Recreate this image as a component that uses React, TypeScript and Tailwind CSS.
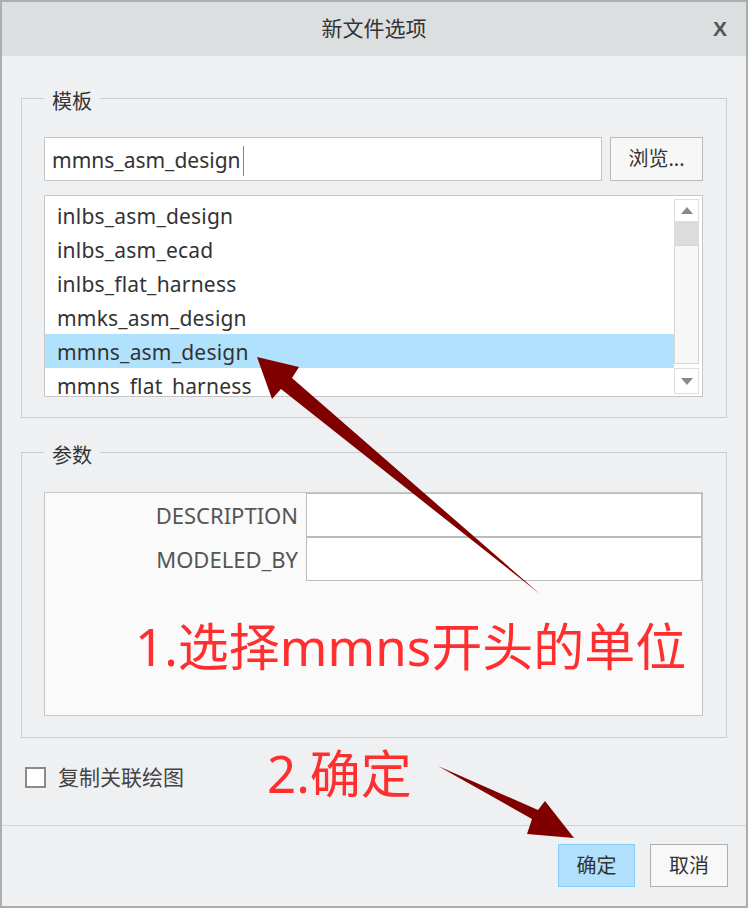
const templates = [
  "inlbs_asm_design",
  "inlbs_asm_ecad",
  "inlbs_flat_harness",
  "mmks_asm_design",
  "mmns_asm_design",
  "mmns_flat_harness",
];

const params = ["DESCRIPTION", "MODELED_BY"];

const App = () => {
  return (
    <div className="w-[750px] h-[910px] bg-white font-['Noto_Sans','Noto_Sans_CJK_SC',sans-serif] text-[#333]">
      <div className="relative w-[748px] h-[908px] border-2 border-[#abadaf] bg-[#eff0f2] flex flex-col">
        {/* title bar */}
        <div className="h-[54px] bg-[#dcdfe0] grid grid-cols-[1fr_auto_1fr] items-center">
          <div />
          <span className="text-[21px] text-[#333]">新文件选项</span>
          <span className="justify-self-end pr-[19px] text-[21px] font-bold text-[#555] font-['Liberation_Sans',sans-serif]">X</span>
        </div>

        {/* body */}
        <div className="flex-1 flex flex-col px-[19px]">
          <fieldset className="mt-[24px] border border-[#cbcdcf] pl-[22px] pr-[23px] pt-[21px] pb-[20px]">
            <legend className="px-[8px] pt-[8px] text-[20px] leading-[28px]">模板</legend>
            <div className="flex gap-[8px]">
              <div className="flex-1 h-[44px] bg-white border border-[#c2c4c6] pl-[7px] pt-[3px] flex items-center text-[21px]">
                <span>mmns_asm_design</span>
                <span className="ml-[2px] w-px h-[30px] bg-[#4a90d9]" />
              </div>
              <button className="w-[93px] h-[44px] bg-[#f7f7f7] border border-[#b9bbbd] text-[20px] text-[#333]">
                浏览...
              </button>
            </div>
            <div className="mt-[14px] h-[202px] bg-white border border-[#c4c6c8] flex overflow-hidden">
              <div className="flex-1 pt-[2px] flex flex-col">
                {templates.map((t) => (
                  <div
                    key={t}
                    className={
                      t === "mmns_asm_design"
                        ? "h-[34px] shrink-0 pl-[12px] pt-[4px] flex items-center text-[21px] tracking-[0.2px] bg-[#b1e2fd]"
                        : "h-[34px] shrink-0 pl-[12px] pt-[4px] flex items-center text-[21px] tracking-[0.2px]"
                    }
                  >
                    {t}
                  </div>
                ))}
              </div>
              <div className="w-[28px] pr-[3px] pt-[3px] pb-[2px] flex flex-col">
                <div className="h-[23px] bg-white border border-[#dedede] flex items-center justify-center">
                  <svg width="12" height="7" viewBox="0 0 12 7">
                    <path d="M0 7 L6 0 L12 7 Z" fill="#8a8a8a" />
                  </svg>
                </div>
                <div className="h-[23px] bg-[#dcdcdc]" />
                <div className="flex-1 bg-[#f7f7f7] border border-[#d6d6d6]" />
                <div className="mt-[4px] h-[26px] bg-white border border-[#dedede] flex items-center justify-center">
                  <svg width="12" height="7" viewBox="0 0 12 7">
                    <path d="M0 0 L12 0 L6 7 Z" fill="#8a8a8a" />
                  </svg>
                </div>
              </div>
            </div>
          </fieldset>

          <fieldset className="mt-[16px] border border-[#cbcdcf] pl-[22px] pr-[23px] pt-[22px] pb-[21px]">
            <legend className="px-[8px] pt-[8px] text-[20px] leading-[28px]">参数</legend>
            <div className="h-[224px] bg-[#fafafa] border border-[#c4c6c8] flex flex-col">
              {params.map((p) => (
                <div key={p} className="grid grid-cols-[261px_1fr]">
                  <div className="h-[44px] pr-[8px] flex items-center justify-end text-[22px] text-[#555]">
                    {p}
                  </div>
                  <div className="h-[44px] bg-white border border-[#b9bbbd]" />
                </div>
              ))}
            </div>
          </fieldset>

          <label className="mt-[24px] ml-[4px] flex items-center gap-[12px]">
            <span className="w-[21px] h-[21px] bg-white border-2 border-[#8a8a8a]" />
            <span className="text-[21px] text-[#444]">复制关联绘图</span>
          </label>
        </div>

        {/* footer */}
        <div className="h-[81px] border-t border-[#cfd1d3] pt-[18px] pr-[18px] flex justify-end items-start gap-[15px]">
          <button className="w-[77px] h-[43px] bg-[#b0e0fc] border border-[#84cdf6] text-[20px] text-[#333]">
            确定
          </button>
          <button className="w-[78px] h-[43px] bg-[#f8f8f8] border border-[#adafb1] text-[20px] text-[#333]">
            取消
          </button>
        </div>

        {/* annotations drawn on top of the screenshot */}
        <span className="absolute left-[133px] top-[619px] text-[51px] leading-none text-[#ff2f2f] whitespace-nowrap">
          1.选择mmns开头的单位
        </span>
        <span className="absolute left-[265px] top-[746px] text-[51px] leading-none text-[#ff2f2f] whitespace-nowrap">
          2.确定
        </span>
        <svg
          className="absolute -left-[2px] -top-[2px] pointer-events-none"
          width="750"
          height="910"
          viewBox="0 0 750 910"
        >
          <polygon points="257,357 299,367 292,378 540,594 281,389 272,399" fill="#800000" />
          <polygon points="438,766 538,810 545,801 574,838 527,834 532,819" fill="#800000" />
        </svg>
      </div>
    </div>
  );
};

export default App;
